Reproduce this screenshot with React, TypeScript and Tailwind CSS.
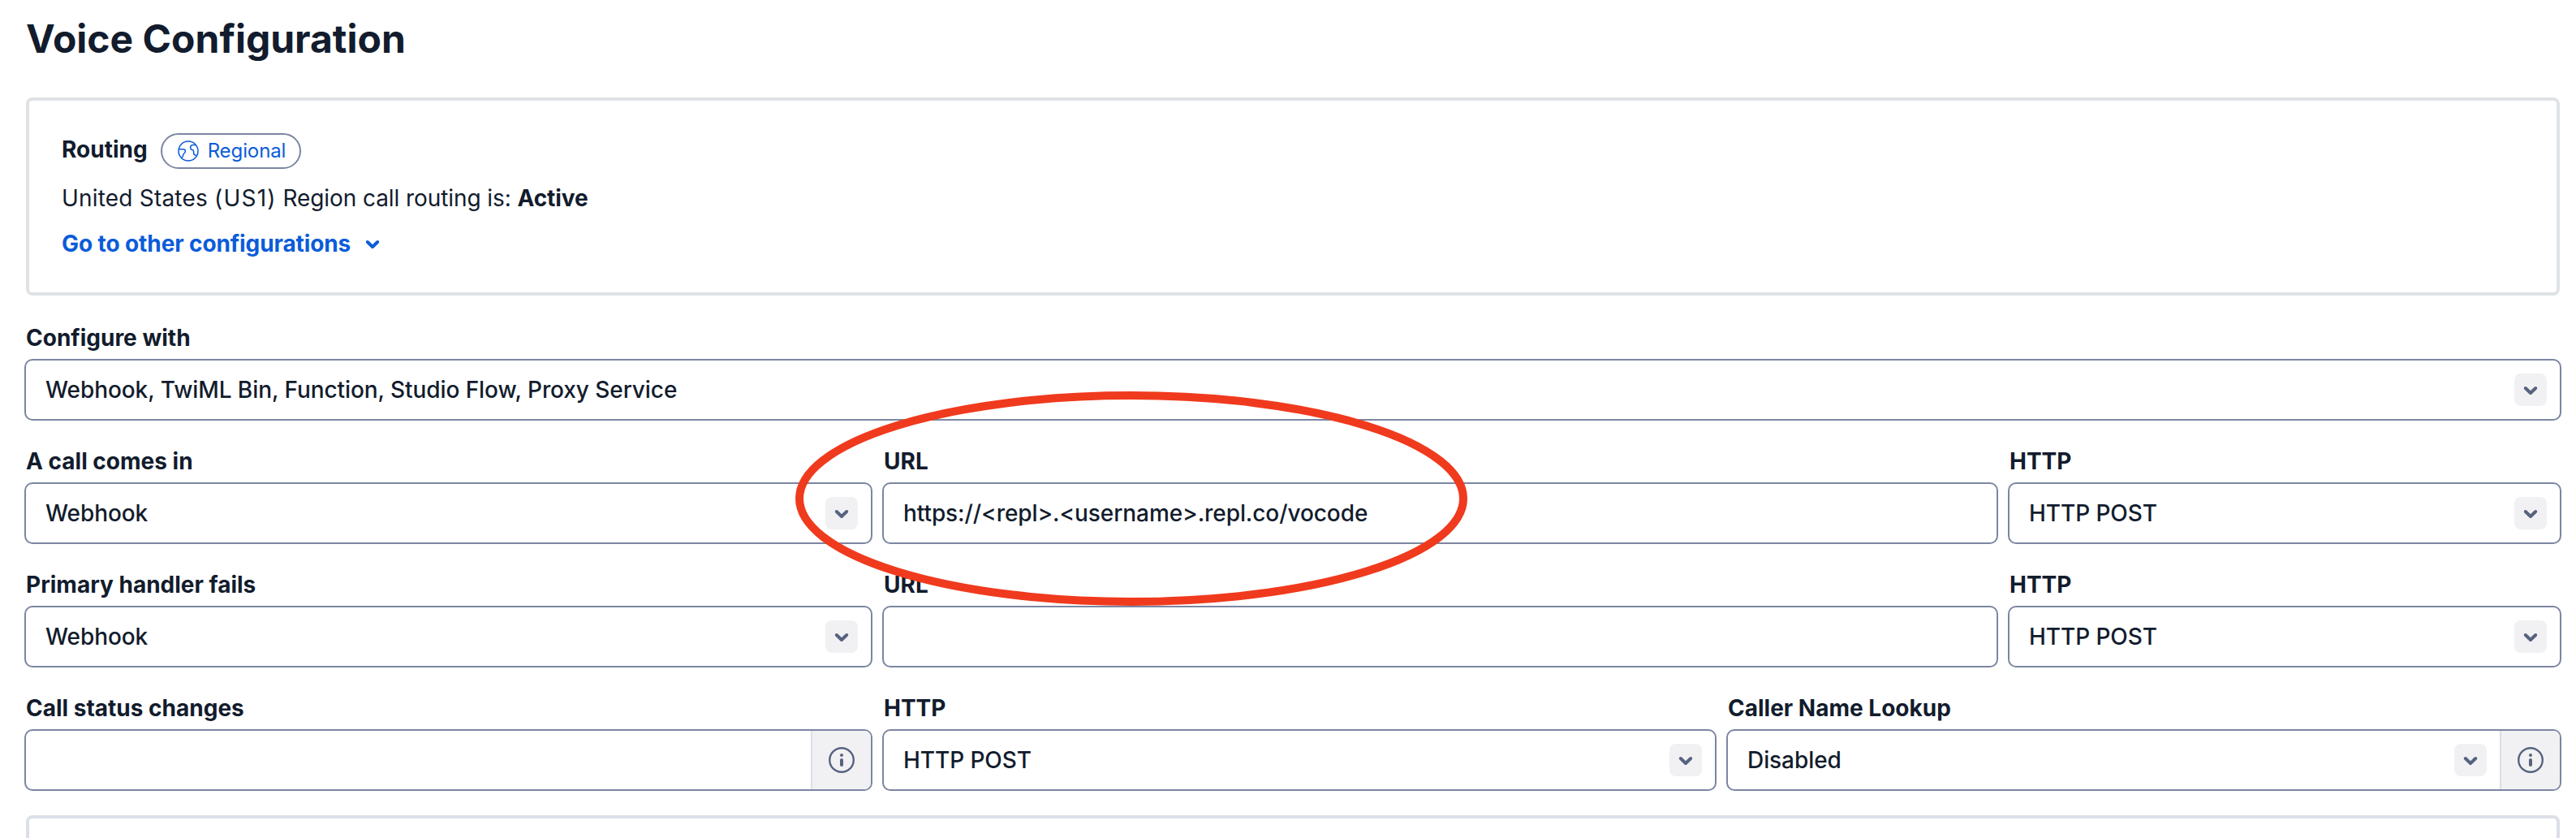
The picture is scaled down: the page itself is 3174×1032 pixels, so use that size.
import type { ReactNode } from "react";

function Chevron({ className }: { className: string }) {
  return (
    <svg viewBox="0 0 40 40" className={className} fill="none" stroke="currentColor" strokeWidth="4" strokeLinecap="round" strokeLinejoin="round">
      <path d="M13.8 18 20 24 26.2 18" />
    </svg>
  );
}

function RegionGlobe() {
  return (
    <svg viewBox="0 0 26 26" className="size-[26px]" fill="none" stroke="currentColor" strokeWidth="1.5" strokeLinejoin="round" strokeLinecap="round">
      <circle cx="13" cy="13" r="12" />
      <path d="M1.6 10.8h5.2c1.4 0 2.6 1.1 2.6 2.5 0 1.3-.6 2-1.5 2.5-.9.6-1.2 1.3-1.2 2.3 0 1.5-.7 2.6-2 3.2" />
      <path d="M21.8 5.4h-2.9c-1.9 0-3.3 1.5-3.3 3.3 0 1.9 1.3 2.7 2.9 3 .9.2 1.1.8 1.1 1.8v1.7c0 1.6.7 2.7 2.5 3.1" />
    </svg>
  );
}

function InfoAddon() {
  return (
    <div className="flex w-[74px] shrink-0 items-center justify-center border-l-2 border-[#dcdfe7] bg-[#f1f1f4] text-[#57637e]">
      <svg viewBox="0 0 32 32" className="size-8" fill="none" stroke="currentColor">
        <circle cx="16" cy="16" r="14.8" strokeWidth="2.4" />
        <path d="M16 16v6" strokeWidth="4" strokeLinecap="round" />
        <circle cx="16" cy="10" r="2" fill="currentColor" stroke="none" />
      </svg>
    </div>
  );
}

interface FieldProps {
  label: string;
  value?: string;
  select?: boolean;
  info?: boolean;
}

function Field({ label, value, select, info }: FieldProps) {
  return (
    <div className="flex min-w-0 flex-col">
      <div className="flex h-10 items-center pl-0.5 text-[28px] font-bold leading-10 whitespace-nowrap">{label}</div>
      <div className="mt-1.5 flex h-19 overflow-hidden rounded-[10px] border-2 border-[#7c86a2]">
        <div className="flex min-w-0 flex-1 items-center justify-between pl-6 pr-4">
          <span className="text-[28px] font-medium leading-10 tracking-[-0.08px] whitespace-nowrap">{value}</span>
          {select && (
            <span className="size-10 shrink-0 rounded-lg bg-[#f1f1f4] text-[#57637e]">
              <Chevron className="size-10" />
            </span>
          )}
        </div>
        {info && <InfoAddon />}
      </div>
    </div>
  );
}

function Row({ cols, children }: { cols: string; children: ReactNode }) {
  return <div className={"grid gap-x-3 " + cols}>{children}</div>;
}

export default function App() {
  return (
    <main className="relative h-[1032px] w-[3174px] overflow-hidden bg-white font-['Inter',sans-serif] text-[#121c2d]">
      <h1 className="ml-8 mt-4 h-16 text-[48px] font-bold leading-16">Voice Configuration</h1>

      <section className="ml-8 mt-10 h-[244px] w-[3122px] rounded-lg border-4 border-[#dfe3e6] pl-10 pt-10">
        <div className="flex h-11 items-center">
          <h2 className="-mt-1 text-[28px] font-bold leading-10">Routing</h2>
          <span className="ml-4 flex h-11 w-[173px] items-center rounded-full border-2 border-[#7c86a2] pl-[19px] text-[#0b5cd9]">
            <RegionGlobe />
            <span className="ml-[11px] text-[24px] leading-8 tracking-[-0.1px]">Regional</span>
          </span>
        </div>
        <p className="mt-4 text-[28px] leading-10 tracking-[-0.08px]">
          <span className="tracking-[0.2px]">United States </span>
          <span className="tracking-[1.2px]">(US1)</span> Region call routing is: <strong className="font-bold">Active</strong>
        </p>
        <a className="mt-4 flex items-center text-[28px] font-bold leading-10 tracking-[-0.1px] text-[#0b5cd9]">
          Go to other configurations
          <Chevron className="ml-[7px] size-10" />
        </a>
      </section>

      <form className="ml-[30px] mt-8 flex w-[3126px] flex-col gap-[30px]">
        <Row cols="grid-cols-1">
          <Field label="Configure with" value="Webhook, TwiML Bin, Function, Studio Flow, Proxy Service" select />
        </Row>
        <Row cols="grid-cols-[1045px_1375px_682px]">
          <Field label="A call comes in" value="Webhook" select />
          <Field label="URL" value="https://<repl>.<username>.repl.co/vocode" />
          <Field label="HTTP" value="HTTP POST" select />
        </Row>
        <Row cols="grid-cols-[1045px_1375px_682px]">
          <Field label="Primary handler fails" value="Webhook" select />
          <Field label="URL" />
          <Field label="HTTP" value="HTTP POST" select />
        </Row>
        <Row cols="grid-cols-[1045px_1028px_1029px]">
          <Field label="Call status changes" info />
          <Field label="HTTP" value="HTTP POST" select />
          <Field label="Caller Name Lookup" value="Disabled" select info />
        </Row>
      </form>

      <section className="ml-8 mt-[30px] h-20 w-[3122px] rounded-lg border-4 border-[#dcdfe7]" />

      <svg className="absolute left-[980px] top-[482px] h-[264px] w-[828px]" viewBox="0 0 828 264" fill="none">
        <ellipse cx="414" cy="132" rx="409" ry="127" stroke="#f03a1e" strokeWidth="10" />
      </svg>
    </main>
  );
}
